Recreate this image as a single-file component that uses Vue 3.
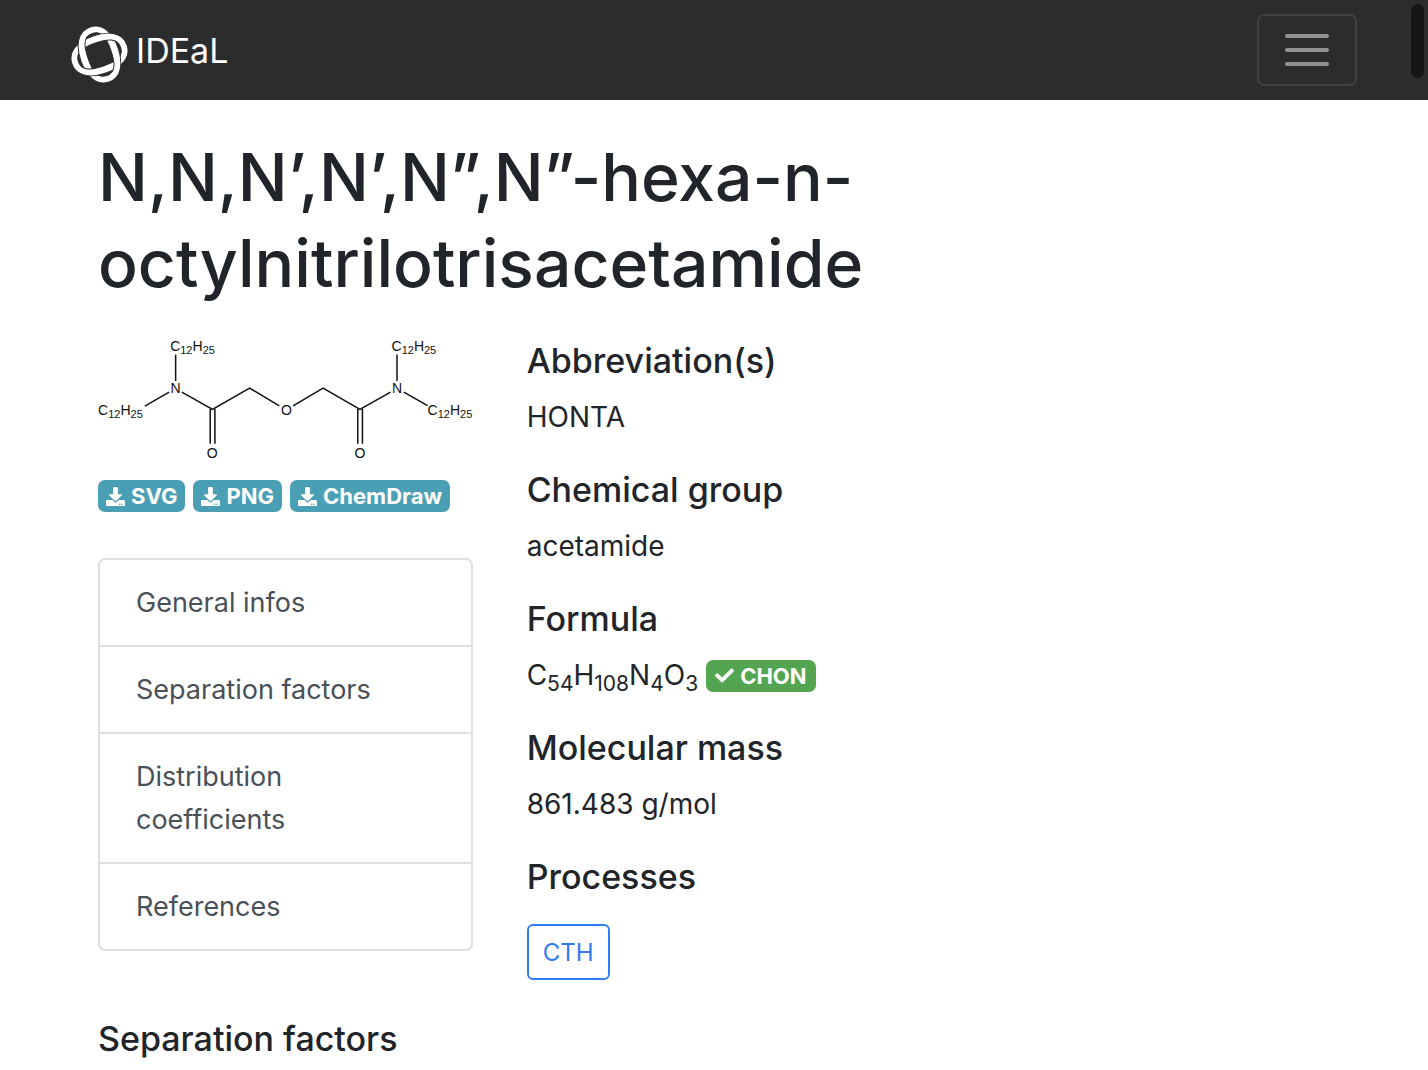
<script setup>
import { ref } from 'vue'

const downloads = ['SVG', 'PNG', 'ChemDraw']
const sections = [
  { id: 'general', label: 'General infos' },
  { id: 'separation', label: 'Separation factors' },
  { id: 'distribution', label: 'Distribution coefficients' },
  { id: 'references', label: 'References' },
]
const formula = [['C', 54], ['H', 108], ['N', 4], ['O', 3]]
const alkylChains = [
  { x: 72, y: 13 },
  { x: 0, y: 77 },
  { x: 293, y: 13 },
  { x: 329, y: 77 },
]
const ring =
  'M0-89C40-89 60-50 60 0S40 89 0 89S-60 50-60 0S-40-89 0-89ZM0-68C-30-68-37-40-37 0S-30 68 0 68S37 40 37 0S30-68 0-68Z'
const menuOpen = ref(false)
</script>

<template>
  <header class="navbar">
    <a class="brand" href="#">
      <svg class="logo" viewBox="-87 -87 174 174" aria-hidden="true">
        <defs>
          <clipPath id="crossings">
            <path d="M-100-100H0V0H-100ZM0 0H100V100H0Z" />
          </clipPath>
        </defs>
        <g transform="rotate(-19)" fill="#fff" fill-rule="evenodd" stroke="#2b2c2e" stroke-width="3">
          <path :d="ring" />
          <path :d="ring" transform="rotate(90)" />
          <g clip-path="url(#crossings)">
            <path :d="ring" />
          </g>
        </g>
      </svg>
      <span>IDEaL</span>
    </a>
    <button class="toggler" type="button" aria-label="Toggle navigation" :aria-expanded="menuOpen" @click="menuOpen = !menuOpen">
      <svg width="44" height="32" viewBox="0 0 44 32" aria-hidden="true">
        <path d="M2 2H42M2 16H42M2 30H42" stroke="#929294" stroke-width="4" stroke-linecap="round" />
      </svg>
    </button>
    <span class="scroll-thumb"></span>
  </header>

  <main class="container">
    <h1>N,N,N’,N’,N”,N”-hexa-n-octylnitrilotrisacetamide</h1>

    <div class="row">
      <div class="side">
        <svg class="molecule" viewBox="0 1 374 122" role="img" aria-label="Molecular structure">
          <g stroke="#111" stroke-width="1.5" fill="none">
            <path d="M77.5 16.5V43M71 54L46.7 68M83.7 54L114.3 71.3L151.3 50L181 67.7M112 71V105.7M116.7 71V105.7" />
            <path d="M298.5 16.5V43M305.3 54L329 67.5M292 54L261.5 71.3L224.7 50L194.7 67.7M259.3 71V105.7M264 71V105.7" />
          </g>
          <text v-for="c in alkylChains" :key="c.x" :x="c.x" :y="c.y">C<tspan class="sub" dy="3">12</tspan><tspan dy="-3">H</tspan><tspan class="sub" dy="3">25</tspan></text>
          <g text-anchor="middle">
            <text x="77.5" y="55">N</text>
            <text x="298.5" y="55">N</text>
            <text x="188" y="77">O</text>
            <text x="114" y="120">O</text>
            <text x="261.5" y="120">O</text>
          </g>
        </svg>

        <div class="downloads">
          <a v-for="d in downloads" :key="d" class="badge info" href="#">
            <svg viewBox="0 0 512 512" aria-hidden="true">
              <path d="M216 0h80c13.3 0 24 10.7 24 24v168h87.7c17.8 0 26.7 21.5 14.1 34.1L269.7 378.3c-7.5 7.5-19.8 7.5-27.3 0L90.1 226.1c-12.6-12.6-3.7-34.1 14.1-34.1H192V24c0-13.3 10.7-24 24-24zm296 376v112c0 13.3-10.7 24-24 24H24c-13.3 0-24-10.7-24-24V376c0-13.3 10.7-24 24-24h146.7l49 49c20.1 20.1 52.5 20.1 72.6 0l49-49H488c13.3 0 24 10.7 24 24zm-124 88c0-11-9-20-20-20s-20 9-20 20 9 20 20 20 20-9 20-20zm64 0c0-11-9-20-20-20s-20 9-20 20 9 20 20 20 20-9 20-20z" />
            </svg>
            {{ d }}
          </a>
        </div>

        <nav class="list">
          <a v-for="s in sections" :key="s.id" :href="'#' + s.id">{{ s.label }}</a>
        </nav>
      </div>

      <div id="general" class="details">
        <h2>Abbreviation(s)</h2>
        <p>HONTA</p>
        <h2>Chemical group</h2>
        <p>acetamide</p>
        <h2>Formula</h2>
        <p class="formula">
          <span><template v-for="[el, n] in formula" :key="el">{{ el }}<sub>{{ n }}</sub></template></span>
          <span class="badge success">
            <svg viewBox="0 0 512 512" aria-hidden="true">
              <path d="M173.898 439.404l-166.4-166.4c-9.997-9.997-9.997-26.206 0-36.204l36.203-36.204c9.997-9.998 26.207-9.998 36.204 0L192 312.69 432.095 72.596c9.997-9.997 26.207-9.997 36.204 0l36.203 36.204c9.997 9.997 9.997 26.206 0 36.204l-294.4 294.401c-9.998 9.997-26.207 9.997-36.204-.001z" />
            </svg>
            CHON
          </span>
        </p>
        <h2>Molecular mass</h2>
        <p>861.483 g/mol</p>
        <h2>Processes</h2>
        <button class="process" type="button">CTH</button>
      </div>
    </div>

    <h2 id="separation" class="section-title">Separation factors</h2>
  </main>
</template>

<style>
body {
  margin: 0;
  background: #fff;
  color: #212529;
  font-family: Inter, "Liberation Sans", sans-serif;
  font-size: 28px;
  line-height: 43px;
}
</style>

<style scoped>
* {
  box-sizing: border-box;
}
a {
  text-decoration: none;
}
.navbar {
  position: relative;
  display: flex;
  align-items: center;
  justify-content: space-between;
  height: 100px;
  padding: 0 71px;
  background: #2b2c2e;
}
.brand {
  display: flex;
  align-items: center;
  gap: 8px;
  color: #fff;
  font-size: 34px;
}
.logo {
  width: 57px;
  height: 57px;
  margin-top: 8px;
}
.toggler {
  display: flex;
  align-items: center;
  justify-content: center;
  width: 100px;
  height: 72px;
  padding: 0;
  background: transparent;
  border: 2px solid #404143;
  border-radius: 7px;
}
.scroll-thumb {
  position: absolute;
  top: 4px;
  right: 4px;
  width: 13px;
  height: 74px;
  border-radius: 7px;
  background: #141517;
}
.container {
  padding: 34px 98px 0;
}
h1 {
  margin: 0 0 33px;
  font-size: 66px;
  font-weight: 500;
  line-height: 86px;
}
h2 {
  margin: 0 0 14px;
  font-size: 34px;
  font-weight: 500;
  line-height: 43px;
}
p {
  margin: 0 0 29px;
}
.row {
  display: flex;
  margin: 0 -27px;
}
.side,
.details {
  min-width: 0;
  padding: 0 27px;
}
.side {
  flex: 0 0 calc(100% / 3);
}
.details {
  flex: 0 0 calc(200% / 3);
}
.molecule {
  display: block;
  width: 100%;
}
.molecule text {
  font-family: "Liberation Sans", Arial, sans-serif;
  font-size: 14px;
  fill: #111;
}
.molecule .sub {
  font-size: 11px;
}
.downloads {
  display: flex;
  gap: 8px;
  margin: 19px 0 46px;
}
.badge {
  display: inline-flex;
  align-items: center;
  gap: 6px;
  height: 32px;
  padding: 0 8px;
  border-radius: 7px;
  color: #fff;
  font-size: 22px;
  font-weight: 700;
  line-height: 32px;
}
.badge svg {
  width: 19px;
  height: 19px;
  fill: currentColor;
}
.info {
  background: #4b9fb5;
}
.success {
  padding: 0 9px;
  background: #54a551;
}
.list {
  border: 2px solid #dfdfdf;
  border-radius: 7px;
}
.list a {
  display: block;
  padding: 21px 36px;
  color: #495057;
  font-size: 27px;
}
.list a + a {
  border-top: 2px solid #dfdfdf;
}
.formula {
  display: flex;
  align-items: center;
  gap: 8px;
}
sub {
  font-size: 21px;
  line-height: 0;
  vertical-align: -6px;
}
.process {
  display: block;
  height: 56px;
  margin-top: 26px;
  padding: 0 14px;
  background: #fff;
  border: 2px solid #2f7cf6;
  border-radius: 6px;
  color: #2f7cf6;
  font-family: inherit;
  font-size: 24px;
}
.section-title {
  margin: 37px 0 0;
}
</style>
